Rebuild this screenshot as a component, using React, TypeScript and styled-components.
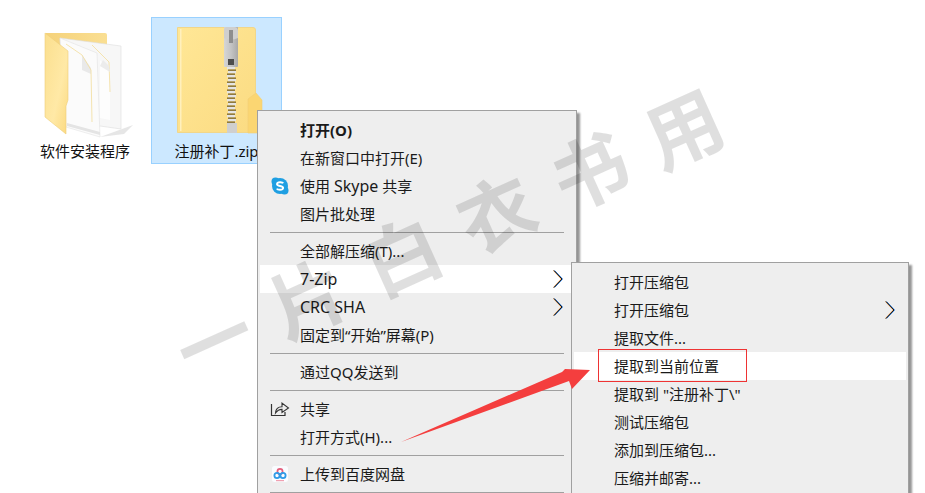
import React from "react";
import styled, { createGlobalStyle } from "styled-components";

const Global = createGlobalStyle`
  html, body { margin: 0; padding: 0; background: #fff; }
  body { width: 925px; height: 493px; overflow: hidden; font-family: "Noto Sans", "Noto Sans CJK SC", sans-serif; }
`;

const Page = styled.div`
  position: relative;
  width: 925px;
  height: 493px;
  overflow: hidden;
  background: #fff;
`;

const Desktop = styled.div`
  display: flex;
  gap: 1px;
  padding: 17px 0 0 20px;
`;

const FileItem = styled.div<{ $selected?: boolean }>`
  box-sizing: border-box;
  width: ${(p) => (p.$selected ? 131 : 130)}px;
  height: 147px;
  display: flex;
  flex-direction: column;
  align-items: center;
  background: ${(p) => (p.$selected ? "#cce8ff" : "transparent")};
  border: 1px solid ${(p) => (p.$selected ? "#99d1ff" : "transparent")};
`;

const FileIcon = styled.div`
  height: 114px;
  margin-top: 9px;
  display: flex;
`;

const FileLabel = styled.div`
  font-size: 15px;
  line-height: 20px;
  color: #111;
  white-space: nowrap;
`;

const Menu = styled.div<{ $left: number; $top: number; $width: number }>`
  position: absolute;
  left: ${(p) => p.$left}px;
  top: ${(p) => p.$top}px;
  width: ${(p) => p.$width}px;
  box-sizing: border-box;
  padding: 5px 2px;
  background: #eeeeee;
  border: 1px solid #a0a0a0;
  box-shadow: 3px 3px 2px rgba(0, 0, 0, 0.42);
`;

const Row = styled.div<{ $hover?: boolean; $bold?: boolean }>`
  position: relative;
  box-sizing: border-box;
  height: 28px;
  padding-bottom: 1px;
  display: grid;
  grid-template-columns: 40px 1fr 24px;
  align-items: center;
  font-size: 15px;
  font-weight: ${(p) => (p.$bold ? 700 : 400)};
  color: #1a1a1a;
  white-space: nowrap;
  background: ${(p) => (p.$hover ? "#fff" : "transparent")};
`;

const IconSlot = styled.span`
  display: flex;
  justify-content: center;
  align-items: center;
  padding-top: 1px;
`;

const Latin = styled.span`
  font-size: 16px;
`;

const Separator = styled.div`
  height: 1px;
  margin: 4px 10px;
  background: #a0a0a0;
`;

const ChevronSvg = styled.svg`
  justify-self: end;
  margin-right: 11px;
  margin-top: 1px;
`;

const RedBox = styled.div`
  position: absolute;
  left: 24px;
  top: -3px;
  width: 147px;
  height: 31px;
  border: 1px solid #ee3333;
`;

const Overlay = styled.svg`
  position: absolute;
  left: 0;
  top: 0;
  pointer-events: none;
`;

const Watermark = styled.div`
  position: absolute;
  left: 152px;
  top: 193px;
  font-family: "Noto Sans CJK SC", sans-serif;
  font-size: 76px;
  font-weight: 700;
  line-height: 1;
  letter-spacing: 27px;
  white-space: nowrap;
  color: rgba(0, 0, 0, 0.125);
  pointer-events: none;
  transform-origin: 295.5px 38px;
  transform: rotate(-24.3deg);
`;

const Chevron = () => (
  <ChevronSvg width="10" height="18" viewBox="0 0 10 18">
    <path d="M1.6 0.5 L9.6 9 L1.6 17.5" fill="none" stroke="#2a8cff" strokeWidth="1" />
    <path d="M0.4 0.5 L8.4 9 L0.4 17.5" fill="none" stroke="#e8862a" strokeWidth="1" />
    <path d="M1 0.5 L9 9 L1 17.5" fill="none" stroke="#111" strokeWidth="1" />
  </ChevronSvg>
);

const FolderOpen = () => (
  <svg width="100" height="114" viewBox="35 27 100 114" style={{ overflow: "visible" }}>
    <defs>
      <linearGradient id="foldPanel" x1="0" y1="0" x2="1" y2="1">
        <stop offset="0" stopColor="#fbdf8e" />
        <stop offset="0.6" stopColor="#ffe9a6" />
        <stop offset="1" stopColor="#fbd97f" />
      </linearGradient>
      <linearGradient id="foldBack" x1="0" y1="0" x2="1" y2="0">
        <stop offset="0" stopColor="#f5d27a" />
        <stop offset="1" stopColor="#fadf93" />
      </linearGradient>
    </defs>
    {/* ground shadow */}
    <polygon points="100,137 122,129 133,125 124,134" fill="#dcdcdc" opacity="0.7" />
    {/* back flap */}
    <path d="M46 33 H105 Q107 33 107 35 V60 H46 Z" fill="url(#foldBack)" />
    {/* back sheet */}
    <polygon points="60,38 121,46 121,129 100,126 66,125" fill="#f7f7f7" stroke="#dedede" strokeWidth="0.6" />
    <polygon points="100,60 110,72 110,120 100,118" fill="#fdfdfd" />
    <polyline points="92,45 109,62 110,92" fill="none" stroke="#f3dd9c" strokeWidth="0.8" />
    <polygon points="100,66 110,72 109,66 103,60" fill="#ececec" />
    {/* front sheet */}
    <polygon points="60,38 97,53 100,137 66,127" fill="#fbfbfb" stroke="#e2e2e2" strokeWidth="0.6" />
    <polygon points="82,55 82,70 91,74 91,68" fill="#e9e9e9" />
    <polyline points="66,44 82,55 91,70 92,122" fill="none" stroke="#f3dd9c" strokeWidth="0.8" />
    {/* front panel */}
    <polygon points="45,33 68,51 68,100 66,106 66,134 45,117" fill="url(#foldPanel)" stroke="#efcf78" strokeWidth="0.6" />
    <polygon points="67,123 100,132 100,135 67,126" fill="#e4e4e4" />
  </svg>
);

const teeth = [0, 1, 2, 3, 4, 5, 6, 7, 8, 9, 10, 11, 12, 13];

const FolderZip = () => (
  <svg width="93" height="114" viewBox="170 27 93 114" style={{ overflow: "visible" }}>
    <defs>
      <linearGradient id="zipBody" x1="0" y1="0" x2="1" y2="1">
        <stop offset="0" stopColor="#ffe796" />
        <stop offset="1" stopColor="#fbdb82" />
      </linearGradient>
      <linearGradient id="zipMetal" x1="0" y1="0" x2="1" y2="0">
        <stop offset="0" stopColor="#d6d6d6" />
        <stop offset="0.5" stopColor="#c4c4c4" />
        <stop offset="1" stopColor="#a9a9a9" />
      </linearGradient>
    </defs>
    <path d="M177.5 27.5 H253 Q255.5 27.5 255.5 30 V132.5 H177.5 Z" fill="url(#zipBody)" stroke="#f1d68a" strokeWidth="1" />
    <rect x="180" y="29" width="1.5" height="102" fill="#fff0bd" />
    <polygon points="248,133 248,99 256,93 262,100 262,133" fill="#fbd672" stroke="#f1cf75" strokeWidth="0.6" />
    <rect x="224" y="27" width="14" height="40" rx="1" fill="url(#zipMetal)" />
    <path d="M224 31 Q224 27 228 27 H234 Q238 27 238 31 V38 Q231 41 224 38 Z" fill="#cfcfcf" />
    <rect x="229" y="30" width="4" height="13" fill="#8e8e8e" />
    <rect x="228" y="59" width="6" height="6" fill="#4d4d4d" />
    {teeth.map((i) => (
      <g key={i}>
        <rect x={227 + (i % 2)} y={67 + i * 4} width="8" height="2.4" fill="#e4e4e4" />
        <rect x={227 + ((i + 1) % 2)} y={69.4 + i * 4} width="8" height="1.6" fill="#8f7a3e" />
      </g>
    ))}
    <rect x="227" y="123" width="10" height="10" fill="#cfcfcf" />
  </svg>
);

const SkypeIcon = () => (
  <svg width="20" height="20" viewBox="0 0 20 20">
    <circle cx="10" cy="10" r="8" fill="#1f9fe2" />
    <circle cx="5.5" cy="5.5" r="4" fill="#1f9fe2" />
    <circle cx="14.5" cy="14.5" r="4" fill="#1f9fe2" />
    <path d="M13.2 7.3 C12.4 5.9 7.3 5.7 7 8 C6.8 10.6 13.4 9.4 13.1 12.1 C12.8 14.4 7.6 14.2 6.8 12.6" fill="none" stroke="#fff" strokeWidth="1.9" />
  </svg>
);

const ShareIcon = () => (
  <svg width="20" height="20" viewBox="0 0 20 20">
    <path d="M1.5 5 V16.5 H15 V13" fill="none" stroke="#333" strokeWidth="1.2" />
    <path d="M5.5 14 C5.8 9.5 8.5 7.8 12 7.8 V4 L18.5 9 L12 13.5 V10.4 C9.5 10.4 7.5 11.2 5.5 14 Z" fill="none" stroke="#333" strokeWidth="1.1" />
  </svg>
);

const BaiduIcon = () => (
  <svg width="20" height="20" viewBox="0 0 20 20">
    <rect x="2" y="2" width="16" height="16" rx="2.5" fill="#fafcff" />
    <circle cx="10" cy="7.5" r="2.6" fill="none" stroke="#e45f7c" strokeWidth="1.7" />
    <circle cx="7" cy="11.5" r="2.6" fill="none" stroke="#2e9be8" strokeWidth="1.8" />
    <circle cx="13" cy="11.5" r="2.6" fill="none" stroke="#2e9be8" strokeWidth="1.8" />
    <rect x="6" y="16" width="8" height="1.2" fill="#f0a0b0" />
  </svg>
);

type ItemProps = {
  icon?: React.ReactNode;
  arrow?: boolean;
  hover?: boolean;
  bold?: boolean;
  children: React.ReactNode;
};

const Item = ({ icon, arrow, hover, bold, children }: ItemProps) => (
  <Row $hover={hover} $bold={bold}>
    <IconSlot>{icon}</IconSlot>
    <span>{children}</span>
    {arrow && <Chevron />}
  </Row>
);

export default function App() {
  return (
    <Page>
      <Global />
      <Desktop>
        <FileItem>
          <FileIcon>
            <FolderOpen />
          </FileIcon>
          <FileLabel>软件安装程序</FileLabel>
        </FileItem>
        <FileItem $selected>
          <FileIcon>
            <FolderZip />
          </FileIcon>
          <FileLabel>注册补丁.zip</FileLabel>
        </FileItem>
      </Desktop>

      <Menu $left={257} $top={110} $width={320}>
        <Item bold>打开(O)</Item>
        <Item>在新窗口中打开(E)</Item>
        <Item icon={<SkypeIcon />}>使用 <Latin>Skype</Latin> 共享</Item>
        <Item>图片批处理</Item>
        <Separator />
        <Item>全部解压缩(T)...</Item>
        <Item hover arrow><Latin>7-Zip</Latin></Item>
        <Item arrow><Latin>CRC SHA</Latin></Item>
        <Item>固定到“开始”屏幕(P)</Item>
        <Separator />
        <Item>通过QQ发送到</Item>
        <Separator />
        <Item icon={<ShareIcon />}>共享</Item>
        <Item>打开方式(H)...</Item>
        <Separator />
        <Item icon={<BaiduIcon />}>上传到百度网盘</Item>
        <Separator />
      </Menu>

      <Watermark>一片白衣书用</Watermark>

      <Menu $left={571} $top={262} $width={338}>
        <Item>打开压缩包</Item>
        <Item arrow>打开压缩包</Item>
        <Item>提取文件...</Item>
        <Item hover>
          提取到当前位置
          <RedBox />
        </Item>
        <Item>提取到 "注册补丁\"</Item>
        <Item>测试压缩包</Item>
        <Item>添加到压缩包...</Item>
        <Item>压缩并邮寄...</Item>
      </Menu>

      <Overlay width="925" height="493" viewBox="0 0 925 493">
        <polygon points="401,442 562,372 565,369 590,370 572,389 569,381" fill="#f43e3e" />
      </Overlay>
    </Page>
  );
}
